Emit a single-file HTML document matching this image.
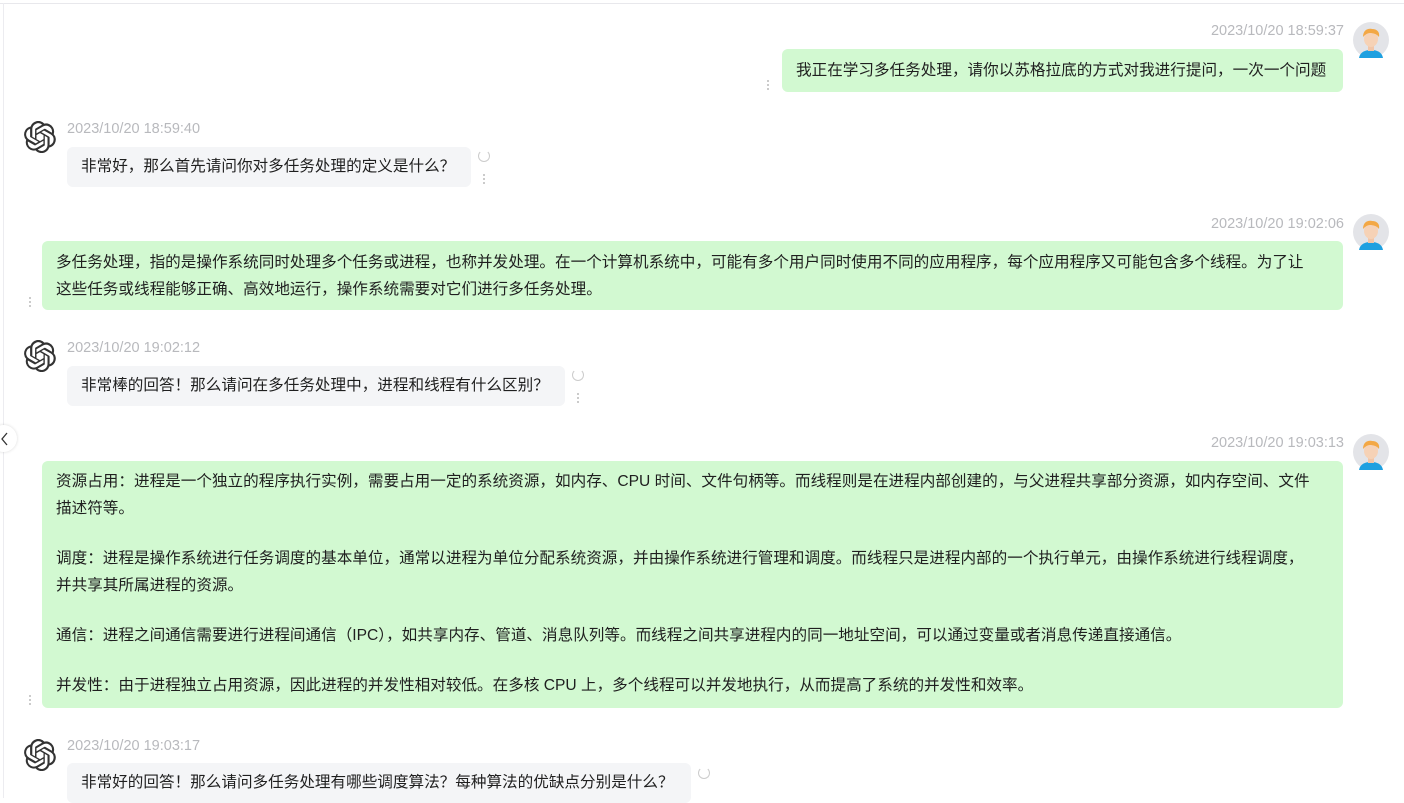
<!DOCTYPE html>
<html><head><meta charset="utf-8"><style>
*{margin:0;padding:0;box-sizing:border-box}
body{width:1404px;height:798px;overflow:hidden;background:#fff;font-family:"Liberation Sans","Noto Sans CJK SC",sans-serif;font-size:15.6px;color:#1f1f1f;position:relative}
.a{position:absolute}
.ts{position:absolute;color:#b8b9bd;font-size:14.5px;line-height:16px}
.ub{position:absolute;background:#d2f9d1;border-radius:6px;padding:0 14px;line-height:27px}
.ub p{margin-bottom:23px}
.ab{position:absolute;background:#f4f5f7;border-radius:6px;padding:0 14px;line-height:40px}
.dots{position:absolute;width:3px}
.dots i{display:block;width:2px;height:2px;background:#bbb;border-radius:50%;margin-bottom:2px}
.rf{position:absolute;width:12px;height:12px;border:1.5px solid #ccc;border-radius:50%;border-top-color:transparent}
</style></head><body>
<div class="a" style="left:0;top:3px;width:1404px;height:1px;background:#e8e8ec"></div>
<div class="a" style="left:3px;top:3px;width:1px;height:795px;background:#ececf0"></div>

<svg width="0" height="0" style="position:absolute"><defs>
<g id="gpt"><path fill="#333" d="M29.7 13.1a8 8 0 0 0-.7-6.6 8.1 8.1 0 0 0-8.7-3.9A8.1 8.1 0 0 0 6.6 5.5a8 8 0 0 0-5.4 3.9 8.1 8.1 0 0 0 1 9.5 8 8 0 0 0 .7 6.6 8.1 8.1 0 0 0 8.7 3.9 8 8 0 0 0 6 2.7 8.1 8.1 0 0 0 7.7-5.6 8 8 0 0 0 5.4-3.9 8.1 8.1 0 0 0-1-9.5zM17.6 30a6 6 0 0 1-3.9-1.4l.2-.1 6.4-3.7a1 1 0 0 0 .5-.9v-9l2.7 1.6v7.4a6 6 0 0 1-5.9 6.1zM4.6 24.5a6 6 0 0 1-.7-4l.2.1 6.4 3.7a1 1 0 0 0 1 0l7.9-4.5v3.1l-6.5 3.8a6 6 0 0 1-8.3-2.2zM2.9 10.5a6 6 0 0 1 3.2-2.7v7.6a1 1 0 0 0 .5.9l7.8 4.5-2.7 1.6-6.5-3.8a6 6 0 0 1-2.3-8.1zm22.3 5.2-7.9-4.6 2.7-1.5 6.5 3.7a6 6 0 0 1-.9 10.9v-7.6a1 1 0 0 0-.4-.9zm2.7-4-.2-.1-6.4-3.7a1 1 0 0 0-1 0l-7.8 4.5V9.3l6.5-3.8a6 6 0 0 1 8.9 6.2zM11 17.3l-2.7-1.6V8.3a6 6 0 0 1 9.9-4.6l-.2.1-6.4 3.7a1 1 0 0 0-.5.9zm1.5-3.2 3.5-2 3.5 2v4l-3.5 2-3.5-2z"/></g>
<g id="ava"><circle cx="18" cy="18" r="18" fill="#e3e4e8"/><path d="M6 36c1-6 6-8 12-8s11 2 12 8z" fill="#1ea0e0"/><rect x="15" y="22" width="6" height="7" fill="#f2c6a8"/><ellipse cx="18" cy="17" rx="7" ry="8" fill="#f6d2b6"/><path d="M10 15c0-7 5-9 9-8 5 0 8 3 7 8-2-3-6-4-9-4-3 0-5 2-7 4z" fill="#f3a845"/></g>
</defs></svg>

<div class="ts" style="right:60px;top:23px">2023/10/20 18:59:37</div>
<svg class="a" style="left:1353px;top:22px" width="36" height="36"><use href="#ava"/></svg>
<div class="ub" style="left:782px;top:49px;width:561px;height:43px;line-height:43px;white-space:nowrap">我正在学习多任务处理，请你以苏格拉底的方式对我进行提问，一次一个问题</div>
<div class="dots" style="left:767px;top:80px"><i></i><i></i><i></i></div>

<svg class="a" style="left:24px;top:121px" width="32" height="32" viewBox="0 0 32 32"><use href="#gpt"/></svg>
<div class="ts" style="left:67px;top:121px">2023/10/20 18:59:40</div>
<div class="ab" style="left:67px;top:147px;width:404px;height:40px;white-space:nowrap">非常好，那么首先请问你对多任务处理的定义是什么？</div>
<div class="rf" style="left:478px;top:150px"></div>
<div class="dots" style="left:483px;top:174px"><i></i><i></i><i></i></div>

<div class="ts" style="right:60px;top:216px">2023/10/20 19:02:06</div>
<svg class="a" style="left:1353px;top:214px" width="36" height="36"><use href="#ava"/></svg>
<div class="ub" style="left:42px;top:241px;width:1301px;height:69px;padding-top:8px">多任务处理，指的是操作系统同时处理多个任务或进程，也称并发处理。在一个计算机系统中，可能有多个用户同时使用不同的应用程序，每个应用程序又可能包含多个线程。为了让<br>这些任务或线程能够正确、高效地运行，操作系统需要对它们进行多任务处理。</div>
<div class="dots" style="left:29px;top:297px"><i></i><i></i><i></i></div>

<svg class="a" style="left:24px;top:340px" width="32" height="32" viewBox="0 0 32 32"><use href="#gpt"/></svg>
<div class="ts" style="left:67px;top:340px">2023/10/20 19:02:12</div>
<div class="ab" style="left:67px;top:366px;width:498px;height:40px;white-space:nowrap">非常棒的回答！那么请问在多任务处理中，进程和线程有什么区别？</div>
<div class="rf" style="left:572px;top:369px"></div>
<div class="dots" style="left:577px;top:393px"><i></i><i></i><i></i></div>

<div class="a" style="left:-10px;top:425px;width:27px;height:27px;border-radius:50%;background:#fff;box-shadow:0 0 3px rgba(0,0,0,.15)"></div>
<svg class="a" style="left:0;top:432px" width="10" height="14"><path d="M7 1 2 7l5 6" stroke="#333" stroke-width="1.3" fill="none"/></svg>

<div class="ts" style="right:60px;top:435px">2023/10/20 19:03:13</div>
<svg class="a" style="left:1353px;top:434px" width="36" height="36"><use href="#ava"/></svg>
<div class="ub" style="left:42px;top:461px;width:1301px;height:247px;padding-top:7px">
<p>资源占用：进程是一个独立的程序执行实例，需要占用一定的系统资源，如内存、CPU 时间、文件句柄等。而线程则是在进程内部创建的，与父进程共享部分资源，如内存空间、文件<br>描述符等。</p>
<p>调度：进程是操作系统进行任务调度的基本单位，通常以进程为单位分配系统资源，并由操作系统进行管理和调度。而线程只是进程内部的一个执行单元，由操作系统进行线程调度，<br>并共享其所属进程的资源。</p>
<p>通信：进程之间通信需要进行进程间通信（IPC），如共享内存、管道、消息队列等。而线程之间共享进程内的同一地址空间，可以通过变量或者消息传递直接通信。</p>
<p>并发性：由于进程独立占用资源，因此进程的并发性相对较低。在多核 CPU 上，多个线程可以并发地执行，从而提高了系统的并发性和效率。</p></div>
<div class="dots" style="left:29px;top:695px"><i></i><i></i><i></i></div>

<svg class="a" style="left:24px;top:739px" width="32" height="32" viewBox="0 0 32 32"><use href="#gpt"/></svg>
<div class="ts" style="left:67px;top:738px">2023/10/20 19:03:17</div>
<div class="ab" style="left:67px;top:763px;width:624px;height:40px;white-space:nowrap">非常好的回答！那么请问多任务处理有哪些调度算法？每种算法的优缺点分别是什么？</div>
<div class="rf" style="left:698px;top:767px"></div>
</body></html>
